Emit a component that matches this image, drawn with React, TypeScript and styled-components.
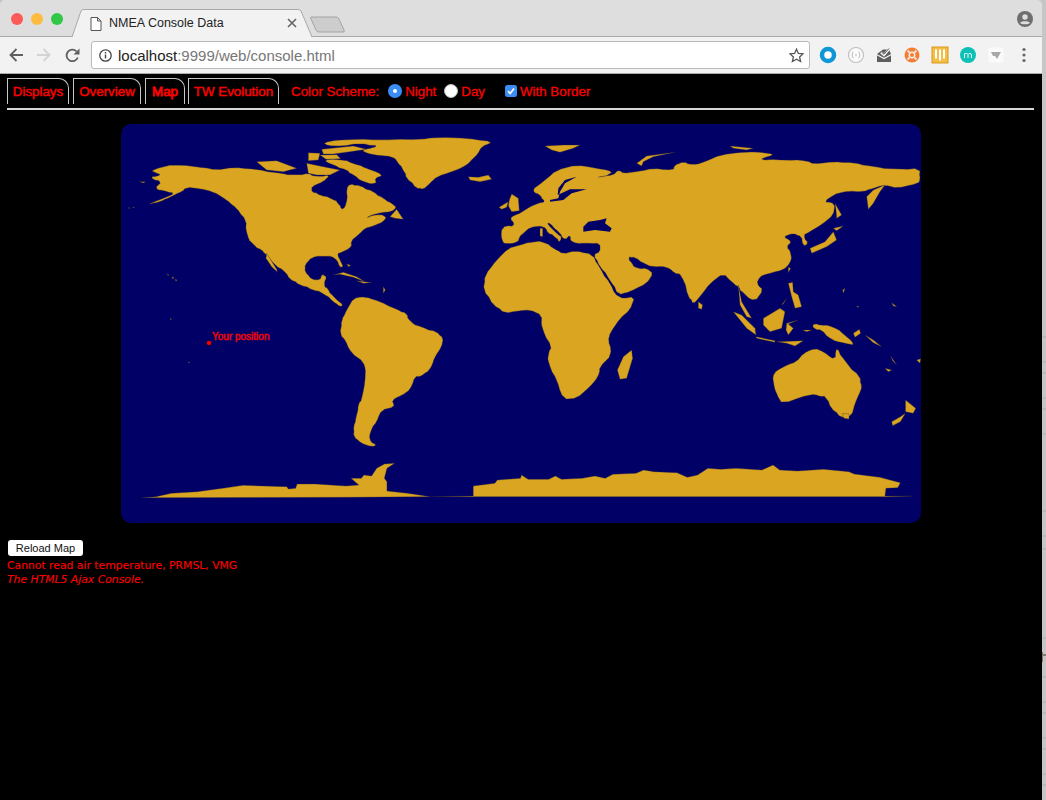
import React from "react";
import styled, { createGlobalStyle } from "styled-components";

const Global = createGlobalStyle`
  html, body { margin: 0; padding: 0; background: #c6c6c6; overflow: hidden; }
  #root { width: 1046px; height: 800px; }
`;

const Desktop = styled.div`
  display: flex;
  width: 1046px;
  height: 800px;
  background: #c6c6c6;
`;
const Browser = styled.div`
  display: flex;
  flex-direction: column;
  width: 1042px;
  height: 800px;
  flex: none;
  border-radius: 5px 5px 0 0;
  overflow: hidden;
`;
const Gutter = styled.svg`
  flex: 1;
  height: 800px;
`;
const TabStrip = styled.div`
  display: flex;
  align-items: flex-end;
  height: 36px;
  padding-left: 7px;
  background: #dedede;
  border-bottom: 1px solid #a9a9a9;
`;
const Lights = styled.div`
  display: flex;
  gap: 8px;
  align-self: flex-start;
  margin: 13px 0 0 4px;
  width: 61px;
  flex: none;
`;
const Light = styled.span<{ $c: string }>`
  width: 12px;
  height: 12px;
  border-radius: 50%;
  background: ${(p) => p.$c};
`;
const BrowserTab = styled.div`
  position: relative;
  display: flex;
  align-items: center;
  width: 240px;
  height: 28px;
  flex: none;
  margin-bottom: -1px;
  font: 12.5px "Liberation Sans", Arial, sans-serif;
  color: #222;
`;
const TabShape = styled.svg`
  position: absolute;
  left: 0;
  top: 0;
`;
const TabLabel = styled.span`
  position: relative;
  margin-left: 37px;
`;
const TabIconSlot = styled.svg`
  position: absolute;
  left: 18px;
  top: 8px;
`;
const TabClose = styled.svg`
  position: absolute;
  left: 215px;
  top: 9px;
`;
const NewTab = styled.svg`
  flex: none;
  margin: 0 0 3px -2px;
`;
const Spacer = styled.div`
  flex: 1;
`;
const Profile = styled.svg`
  align-self: flex-start;
  margin: 11px 9px 0 0;
`;
const Toolbar = styled.div`
  display: flex;
  align-items: center;
  height: 36px;
  padding-left: 9px;
  background: #f2f2f2;
  border-bottom: 1px solid #a9a9a9;
`;
const NavGroup = styled.div`
  display: flex;
  gap: 14px;
  width: 82px;
  flex: none;
`;
const UrlBox = styled.div`
  display: flex;
  align-items: center;
  box-sizing: border-box;
  width: 719px;
  height: 28px;
  flex: none;
  padding: 0 5px 0 7px;
  background: #fff;
  border: 1px solid #b9b9b9;
  border-radius: 3px;
  font: 15px "Liberation Sans", Arial, sans-serif;
  color: #222;
`;
const UrlHost = styled.span`
  margin-left: 6px;
`;
const UrlRest = styled.span`
  color: #777;
`;
const Extensions = styled.div`
  display: flex;
  align-items: center;
  margin-left: 9px;
  gap: 10px;
`;
const Page = styled.main`
  flex: 1;
  padding: 4px 8px 0 7px;
  background: #000;
  color: #f00;
`;
const TabRow = styled.nav`
  display: flex;
  align-items: stretch;
  height: 26px;
  padding-bottom: 4px;
  border-bottom: 2px solid #d8d8d8;
  font: 13.33px "Liberation Sans", Arial, sans-serif;
`;
const PageTab = styled.a<{ $active?: boolean; $w: number; $gap?: number }>`
  box-sizing: border-box;
  display: flex;
  align-items: center;
  justify-content: center;
  width: ${(p) => p.$w}px;
  margin-right: ${(p) => p.$gap ?? 4}px;
  border: 1px solid #c8c8c8;
  border-bottom: none;
  border-radius: 0 10px 0 0;
  -webkit-text-stroke: ${(p) => (p.$active ? "0.8px" : "0.45px")} #f00;
`;
const Options = styled.div`
  display: flex;
  align-items: center;
  margin-left: 8px;
  -webkit-text-stroke: 0.3px #f00;
`;
const OptionLabel = styled.span<{ $gap?: number; $lead?: number }>`
  margin-right: ${(p) => p.$gap ?? 0}px;
  margin-left: ${(p) => p.$lead ?? 3}px;
`;
const Radio = styled.span<{ $on?: boolean }>`
  box-sizing: border-box;
  width: 14px;
  height: 14px;
  border-radius: 50%;
  background: #fff;
  border: ${(p) => (p.$on ? "5px solid #3b8df5" : "1px solid #bbb")};
`;
const Check = styled.span`
  display: flex;
  align-items: center;
  justify-content: center;
  width: 12px;
  height: 12px;
  border-radius: 2.5px;
  background: #3b8df5;
`;
const MapWrap = styled.div`
  position: relative;
  width: 800px;
  height: 399px;
  margin: 14px 0 0 114px;
  background: #000066;
  border-radius: 10px;
  overflow: hidden;
`;
const MapSvg = styled.svg`
  display: block;
`;
const Land = styled.g`
  fill: #daa520;
  stroke: #2a2440;
  stroke-opacity: 0.55;
  stroke-width: 0.6;
  stroke-linejoin: round;
  & polygon { vector-effect: non-scaling-stroke; }
`;
const Water = styled.polygon`
  fill: #000066;
  stroke: none;
`;
const PosDot = styled.span`
  position: absolute;
  left: 86px;
  top: 217px;
  width: 4px;
  height: 4px;
  border-radius: 50%;
  background: #f00;
  box-shadow: 0 0 0 0.5px #600;
`;
const PosLabel = styled.span`
  position: absolute;
  left: 91px;
  top: 207px;
  font: 10px "Liberation Sans", Arial, sans-serif;
  color: #f00;
  -webkit-text-stroke: 0.4px #f00;
`;
const ReloadButton = styled.button`
  display: block;
  box-sizing: border-box;
  width: 75px;
  height: 16px;
  margin: 17px 0 3px 1px;
  padding: 0;
  background: #fff;
  border: none;
  border-radius: 3px;
  font: 11px "Liberation Sans", Arial, sans-serif;
  color: #111;
`;
const StatusLine = styled.div<{ $italic?: boolean }>`
  font: ${(p) => (p.$italic ? "italic " : "")}10.8px/14px "DejaVu Sans", Verdana, sans-serif;
  color: #f00;
  -webkit-text-stroke: 0.1px #f00;
`;

/* Rounds a traced coast a little and adds a small fixed wobble so it does not read as straight facets. */
function coast(d: string): string {
  const pts = d.split(" ").map((s) => s.split(",").map(Number));
  if (pts.length < 9) return d;
  const out: number[][] = [];
  pts.forEach((a, i) => {
    const b = pts[(i + 1) % pts.length];
    for (const t of [0.22, 0.5, 0.78]) {
      const w = t === 0.5 ? 1.6 : 0;
      const len = Math.hypot(b[0] - a[0], b[1] - a[1]);
      const n = len > 14 ? Math.sin(i * 12.9898 + t * 78.233) * w : 0;
      out.push([a[0] + (b[0] - a[0]) * t + n, a[1] + (b[1] - a[1]) * t - n]);
    }
  });
  return out.map((p) => `${p[0].toFixed(1)},${p[1].toFixed(1)}`).join(" ");
}

const P = ({ d }: { d: string }) => <polygon points={coast(d)} />;

const z5 = [
  "95,152 130,140 165,135 230,140 290,150 340,142 410,148 480,160 530,165 565,160 590,170 630,165 610,185 575,200 575,215 600,225 640,238 655,250 665,268 675,262 682,235 680,205 690,192 720,197 760,215 790,235 815,250 830,262 815,275 770,280 735,295 770,283 800,290 790,305 760,318 735,325 715,345 695,360 695,380 670,395 652,400 660,420 670,440 660,442 645,412 610,408 575,412 555,435 555,455 575,478 600,480 607,462 620,470 612,495 622,505 640,530 670,555 660,560 640,545 610,520 580,510 540,495 510,478 490,450 470,440 440,405 425,390 400,375 380,345 378,300 350,265 320,240 280,215 220,203 195,205 190,212 150,232 120,245 80,255 130,235 165,220 130,212 105,205 125,185 88,172 125,165 100,155",
  "440,400 470,448 472,456 455,440 438,415",
  "605,68 680,58 780,60 900,58 960,52 1040,55 1120,65 1085,80 1075,100 1050,125 1040,135 1010,150 950,170 930,190 910,208 890,205 860,175 850,150 835,130 820,110 760,105 720,90 780,78 720,70 640,80",
  "610,120 660,118 700,130 740,145 790,165 765,175 770,190 740,190 700,165 680,150 640,135",
  "605,88 700,78 740,88 690,95 640,102 610,102",
  "600,105 650,104 662,116 618,118",
  "410,125 470,122 530,145 490,155 440,150",
  "565,98 600,100 595,120 565,122",
  "560,130 610,140 660,150 630,165 590,165 565,160",
  "810,290 830,268 850,298 825,295",
  "640,465 670,457 710,470 735,485 700,472 660,463",
  "710,482 755,488 730,490",
  "140,462 146,464 145,467", "155,470 163,474 158,476", "165,478 171,480 168,484",
  "680,432 692,436 686,440", "790,500 796,510 790,520", "150,595 155,597 152,599", "205,725 210,727 206,729",
  "25,264 28,262 28,266", "38,261 43,262 40,264", "58,185 75,185 72,189",
  "660,640 665,600 680,570 700,535 735,530 780,545 830,568 860,580 870,605 905,622 950,635 970,655 965,680 945,710 930,750 900,770 885,770 870,810 847,825 816,840 824,860 785,870 770,905 755,925 747,960 770,975 755,980 724,970 701,950 701,920 708,895 716,850 725,840 738,760 730,725 695,700 675,660",
  "1045,170 1075,172 1105,165 1115,178 1080,185 1050,180",
  "1137,262 1165,245 1160,262 1145,268",
  "1168,240 1175,222 1195,235 1198,272 1175,275 1165,258",
];

const z6 = [
  "-55,320 -15,318 -30,295 -15,285 0,280 30,260 60,248 75,245 60,225 35,210 70,185 110,150 170,135 230,145 280,155 255,170 230,172 280,165 295,150 310,160 350,155 400,145 460,150 465,135 490,125 520,135 555,125 600,105 680,95 750,100 760,105 715,120 800,120 860,122 880,132 940,125 1000,128 1060,140 1130,148 1200,145 1200,180 1195,190 1130,205 1095,195 1060,205 1030,215 960,215 910,245 945,250 940,285 910,310 870,335 850,345 865,370 850,378 845,350 820,340 790,350 815,365 800,380 815,405 810,430 790,450 740,462 720,470 710,490 730,510 705,545 670,520 655,500 640,490 610,460 570,490 540,530 520,552 505,530 485,465 465,460 440,440 400,440 380,435 345,412 325,410 335,430 350,445 380,445 400,460 380,490 330,515 295,525 270,480 240,440 220,405 240,395 240,370 200,370 155,368 150,345 135,360 120,340 88,308 82,312 115,345 125,350 118,368 105,350 85,340 70,318 30,322 10,340 0,348 -5,365 -35,372 -55,365",
  "0,375 40,365 70,365 100,385 130,402 165,392 218,403 240,445 270,490 295,535 345,530 330,570 300,595 270,640 265,660 275,705 240,740 235,770 210,800 170,835 130,838 110,780 85,730 85,700 95,680 65,625 65,585 30,570 0,572 -45,580 -80,555 -110,510 -105,465 -70,420 -35,385",
  "335,690 338,715 320,775 300,778 292,750 310,710",
  "75,78 130,75 180,75 160,85 120,97 95,90",
  "350,130 380,108 465,97 400,110 370,125 365,138",
  "630,78 700,85 680,90 640,85",
  "945,250 965,285 950,295 948,270",
  "940,325 970,318 950,332",
  "870,385 915,365 940,335 950,360 920,380 875,400",
  "1095,195 1080,215 1060,250 1045,268 1040,230 1060,210",
  "535,545 548,555 545,568 535,565",
  "805,442 812,445 805,458",
  "805,490 818,487 820,515 835,525 845,560 825,565 815,530",
  "785,555 800,535 790,552",
  "655,495 665,545 695,595 680,590 660,555",
  "640,575 665,585 705,625 708,645 680,625",
  "730,595 780,565 795,575 785,625 750,635 730,615",
  "800,610 835,600 805,612 820,625 805,645 798,630",
  "708,650 765,662 765,667 710,655",
  "770,665 850,662 825,678 800,670",
  "848,630 875,630 860,635",
  "878,612 900,615 940,620 975,645 1005,675 975,670 935,660 905,630 880,625",
  "1000,640 1018,628 1022,640 1005,652",
  "1035,645 1060,660 1085,680 1060,668",
  "1112,708 1130,735 1118,722", "1095,745 1115,750 1105,755", "1190,720 1202,716 1200,730",
  "1115,548 1130,560 1120,558", "968,510 975,505 970,520", "1010,558 1018,560 1012,562",
  "760,760 790,740 830,725 850,700 885,685 910,695 945,720 950,680 975,725 1020,770 1025,800 1023,810 1005,850 995,887 964,894 933,864 915,828 905,830 871,822 787,852 771,825 760,790",
  "60,325 68,325 68,350 60,348",
];

const water6 = [
  "190,320 205,305 240,300 260,295 255,310 275,325 270,335 225,330 190,335",
  "90,240 115,235 120,215 135,190 170,170 135,180 115,205 113,225 150,208 200,208 155,220 130,240 90,245",
];

const z7 = [
  "42,323 70,320 100,310 150,305 200,295 240,286 325,290 328,297 342,295 345,282 380,282 440,288 465,285 450,265 470,265 475,255 490,258 500,235 515,222 535,220 520,235 515,265 520,275 520,303 560,310 605,320 688,318 688,288 730,280 735,270 780,265 782,255 795,268 835,268 848,258 860,268 900,265 925,258 945,265 960,253 1005,250 1020,240 1040,245 1085,248 1105,262 1125,255 1145,235 1170,238 1200,235 1250,240 1272,225 1285,240 1320,243 1370,238 1420,245 1430,252 1480,262 1520,278 1515,293 1492,295 1490,318 1545,318 1490,320 600,320 440,322",
  "1530,30 1550,55 1545,70 1530,65",
  "1530,70 1520,95 1505,107 1503,95 1520,80",
  "1407,70 1420,72 1420,87 1410,85",
];

const WorldMap = () => (
  <MapSvg width="800" height="399" viewBox="121 124 800 399">
    <Land>
      <g transform="translate(120 120) scale(.33333)">{z5.map((d, i) => <P key={i} d={d} />)}</g>
      <g transform="translate(520 120) scale(.33333)">{z6.map((d, i) => <P key={i} d={d} />)}</g>
      <g transform="translate(120 390) scale(.5134 .33333)">{z7.map((d, i) => <polygon key={i} points={d} />)}</g>
    </Land>
    <g transform="translate(520 120) scale(.33333)">{water6.map((d, i) => <Water key={i} points={d} />)}</g>
  </MapSvg>
);

const ExtCircleBlue = () => (
  <svg width="18" height="18" viewBox="0 0 18 18"><circle cx="9" cy="9" r="6" fill="#fff" stroke="#0d97d6" strokeWidth="4.5" /></svg>
);
const ExtBraces = () => (
  <svg width="18" height="18" viewBox="0 0 18 18"><circle cx="9" cy="9" r="7.5" fill="#fafafa" stroke="#bdbdbd" strokeWidth="1.1" />
    <path d="M6.5 6c-1 0-1 .6-1 1.5S5 9 4.8 9c.2 0 .7 0 .7 1.2s0 1.8 1 1.8M11.5 6c1 0 1 .6 1 1.5s.5 1.500.7 1.500c-.2 0-.7 0-.7 1.200s0 1.800-1 1.800M8 9h2" fill="none" stroke="#aaa" strokeWidth=".8" /></svg>
);
const ExtMail = () => (
  <svg width="18" height="18" viewBox="0 0 18 18">
    <path d="M2 8L8 3.500 14 3.500 16 8V16H2z" fill="#5e5e5e" />
    <path d="M1.500 8.500L9 12.500 16.500 8.500" fill="none" stroke="#f2f2f2" strokeWidth="1.300" />
    <path d="M6 6.500l3 2.500 5.500-6.500" fill="none" stroke="#f2f2f2" strokeWidth="2.400" />
    <path d="M6.500 6l2.500 2.200 5-5.700" fill="none" stroke="#5e5e5e" strokeWidth="1" />
  </svg>
);
const ExtBuoy = () => (
  <svg width="18" height="18" viewBox="0 0 18 18"><circle cx="9" cy="9" r="7.500" fill="#f57d33" /><circle cx="9" cy="9" r="3.400" fill="#f2f2f2" /><circle cx="9" cy="9" r="2" fill="#f57d33" /><path d="M4.500 4.500l2.500 2.500M13.500 4.500L11 7M4.500 13.500L7 11M13.500 13.500L11 11" stroke="#f7dac8" strokeWidth="2" /></svg>
);
const ExtBars = () => (
  <svg width="18" height="18" viewBox="0 0 18 18"><rect x="1" y="1" width="16" height="16" fill="#f4bd45" stroke="#d89a1e" /><path d="M5 3.500v9M9 3.500v11M13 3.500v9" stroke="#fff" strokeWidth="2" /></svg>
);
const ExtM = () => (
  <svg width="18" height="18" viewBox="0 0 18 18"><circle cx="9" cy="9" r="8" fill="#0cc0b6" />
    <path d="M5.500 12V7.500M5.500 8.500c.6-1.500 3-1.500 3.500 0V12M9 8.500c.6-1.500 3.500-1.500 3.500 .5V12" fill="none" stroke="#eafafa" strokeWidth="1" /></svg>
);
const ExtShield = () => (
  <svg width="18" height="18" viewBox="0 0 18 18"><rect x="1.500" y="1.500" width="15" height="15" rx="2" fill="#fafafa" /><path d="M4 6h10l-4 7-2-3-2 0z" fill="#a8a8a8" /></svg>
);

export default function App() {
  return (
    <>
      <Global />
      <Desktop>
        <Browser>
          <TabStrip>
            <Lights>
              <Light $c="#fc5b57" />
              <Light $c="#fdbc40" />
              <Light $c="#33c748" />
            </Lights>
            <BrowserTab>
              <TabShape width="240" height="28" viewBox="0 0 240 28">
                <path d="M0 28L9 2Q10 .5 12 .5H226Q228 .5 229 2L240 28" fill="#f2f2f2" stroke="#a9a9a9" />
              </TabShape>
              <TabIconSlot width="12" height="14" viewBox="0 0 12 14">
                <path d="M1 .5h6.500l3.500 3.500v9.500H1zM7.500 .5V4H11" fill="#fff" stroke="#555" />
              </TabIconSlot>
              <TabLabel>NMEA Console Data</TabLabel>
              <TabClose width="10" height="10" viewBox="0 0 10 10">
                <path d="M1 1l8 8M9 1l-8 8" stroke="#666" strokeWidth="1.600" />
              </TabClose>
            </BrowserTab>
            <NewTab width="36" height="17" viewBox="0 0 36 17">
              <path d="M1 1H26Q28 1 29 3L34 14Q35 16 33 16H9Q7 16 6 14L1 3Q0 1 1 1z" fill="#cdcdcd" stroke="#a4a4a4" />
            </NewTab>
            <Spacer />
            <Profile width="16" height="16" viewBox="0 0 16 16">
              <circle cx="8" cy="8" r="8" fill="#6e6e6e" />
              <circle cx="8" cy="6" r="2.700" fill="#dedede" />
              <path d="M3 12c1-2.500 9-2.500 10 0-1.500 1.700-8.500 1.700-10 0z" fill="#dedede" />
            </Profile>
          </TabStrip>
          <Toolbar>
            <NavGroup>
              <svg width="14" height="14" viewBox="0 0 14 14"><path d="M14 7H1.500M7.500 1L1.500 7l6 6" fill="none" stroke="#5f5f5f" strokeWidth="1.800" /></svg>
              <svg width="14" height="14" viewBox="0 0 14 14"><path d="M0 7h12.500M6.500 1l6 6-6 6" fill="none" stroke="#d3d3d3" strokeWidth="1.800" /></svg>
              <svg width="15" height="15" viewBox="0 0 15 15"><path d="M12.800 9.500A5.800 5.800 0 1 1 11.500 3.300" fill="none" stroke="#5f5f5f" strokeWidth="1.800" /><path d="M14.500 .5v6h-6z" fill="#5f5f5f" /></svg>
            </NavGroup>
            <UrlBox>
              <svg width="13" height="13" viewBox="0 0 13 13"><circle cx="6.500" cy="6.500" r="5.700" fill="none" stroke="#444" strokeWidth="1.300" /><path d="M6.500 5.500v4M6.500 3v1.400" stroke="#444" strokeWidth="1.400" /></svg>
              <UrlHost>localhost</UrlHost>
              <UrlRest>:9999/web/console.html</UrlRest>
              <Spacer />
              <svg width="15" height="15" viewBox="0 0 15 15"><path d="M7.500 1.200l1.900 4.200 4.600.5-3.400 3.100 1 4.500-4.100-2.300-4.100 2.300 1-4.500L1 5.900l4.600-.5z" fill="none" stroke="#555" strokeWidth="1.300" /></svg>
            </UrlBox>
            <Extensions>
              <ExtCircleBlue />
              <ExtBraces />
              <ExtMail />
              <ExtBuoy />
              <ExtBars />
              <ExtM />
              <ExtShield />
              <svg width="18" height="18" viewBox="0 0 18 18"><g fill="#666"><circle cx="9" cy="3.500" r="1.600" /><circle cx="9" cy="9" r="1.600" /><circle cx="9" cy="14.500" r="1.600" /></g></svg>
            </Extensions>
          </Toolbar>
          <Page>
            <TabRow>
              <PageTab $w={62}>Displays</PageTab>
              <PageTab $w={68}>Overview</PageTab>
              <PageTab $w={40} $gap={3} $active>Map</PageTab>
              <PageTab $w={91}>TW Evolution</PageTab>
              <Options>
                <OptionLabel $lead={0} $gap={9}>Color Scheme:</OptionLabel>
                <Radio $on />
                <OptionLabel $gap={8}>Night</OptionLabel>
                <Radio />
                <OptionLabel $gap={20}>Day</OptionLabel>
                <Check>
                  <svg width="10" height="10" viewBox="0 0 10 10"><path d="M2 5.200l2.200 2.300L8 2.500" fill="none" stroke="#fff" strokeWidth="1.700" /></svg>
                </Check>
                <OptionLabel>With Border</OptionLabel>
              </Options>
            </TabRow>
            <MapWrap>
              <WorldMap />
              <PosDot />
              <PosLabel>Your position</PosLabel>
            </MapWrap>
            <ReloadButton>Reload Map</ReloadButton>
            <StatusLine>Cannot read air temperature, PRMSL, VMG</StatusLine>
            <StatusLine $italic>The HTML5 Ajax Console.</StatusLine>
          </Page>
        </Browser>
        <Gutter viewBox="0 0 4 800">
          <path d="M0 337h4M0 362h4M0 373h4M0 398h4M0 409h4M0 434h4M0 511h4M0 536h4M0 549h4M0 638h4M0 677h4M0 702h4M0 713h4M0 738h4M0 749h4M0 774h4M0 785h4" stroke="#b0b0b0" strokeWidth="1" />
          <path d="M0 652v10" stroke="#7a5a30" strokeWidth="1.500" />
          <path d="M1 655h3" stroke="#333" strokeWidth="1" />
        </Gutter>
      </Desktop>
    </>
  );
}
